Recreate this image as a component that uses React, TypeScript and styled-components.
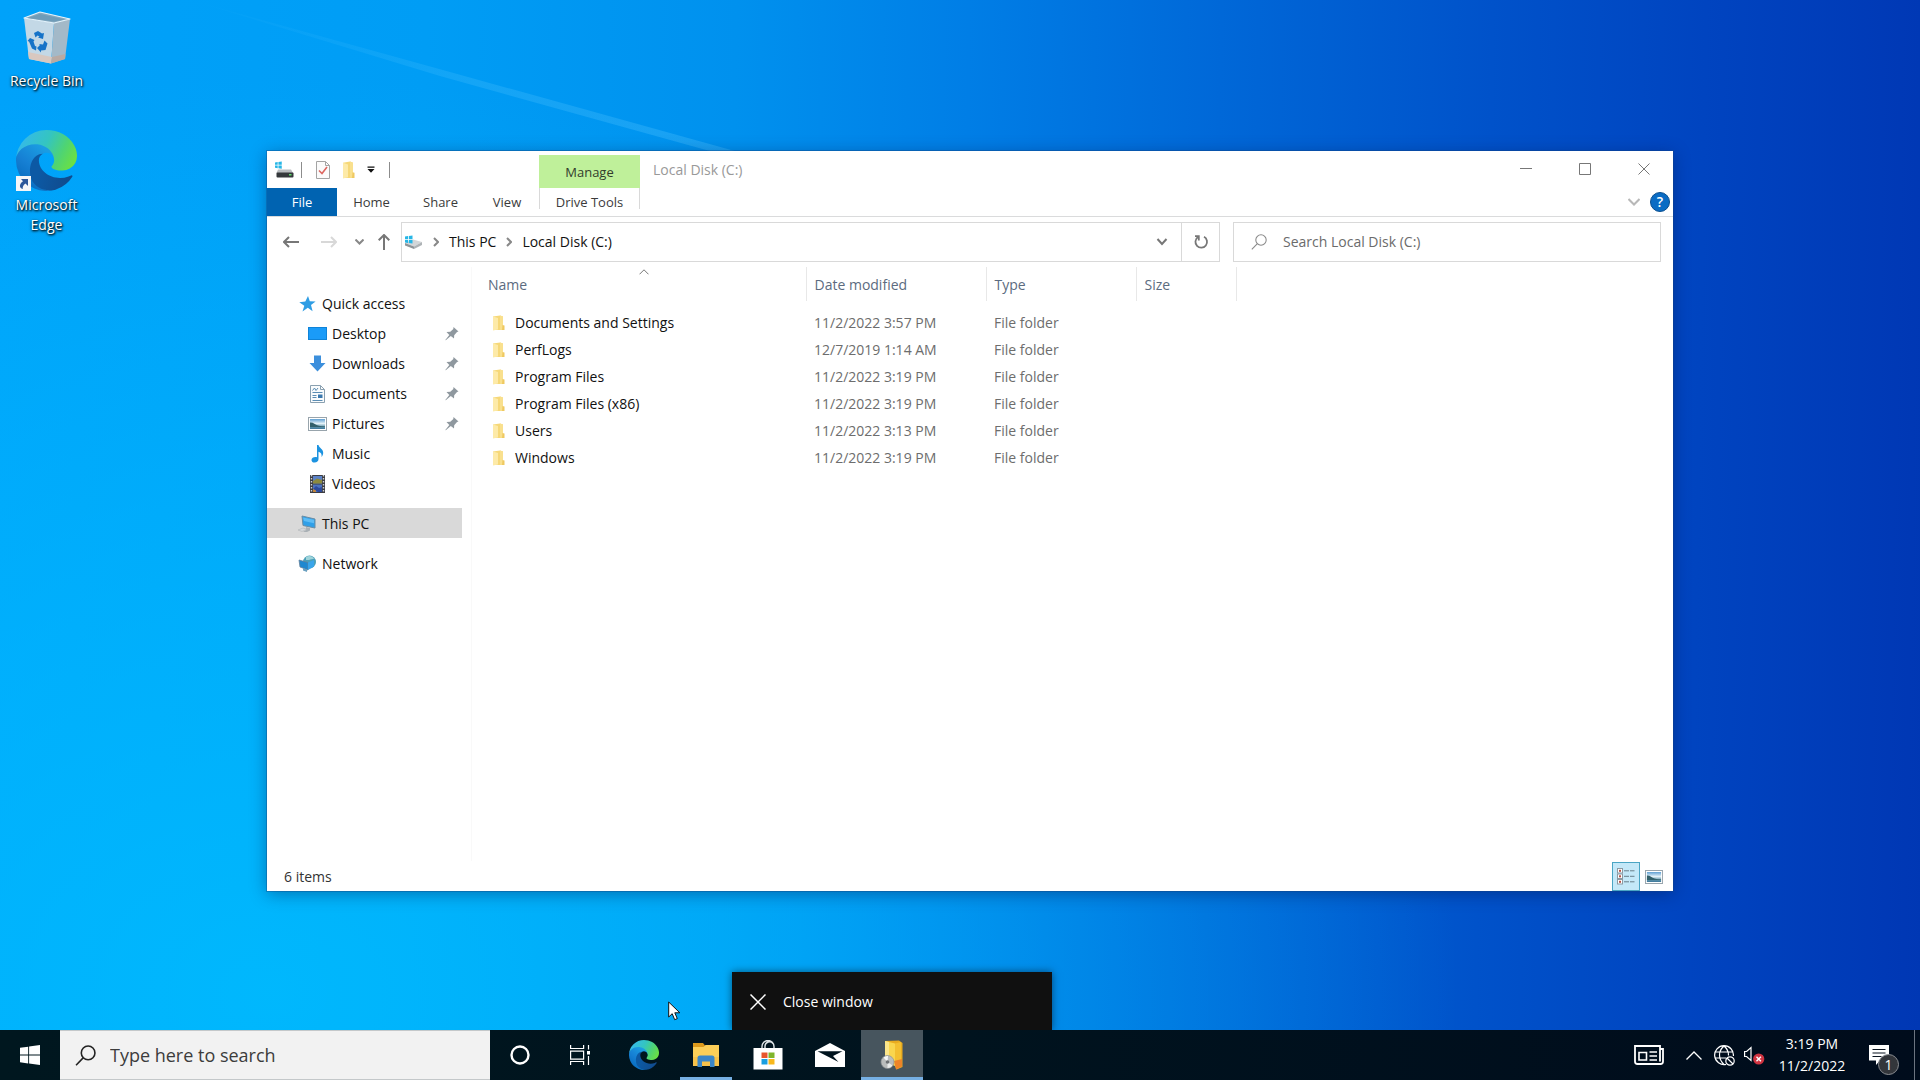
import React, { useId } from "react";
import styled, { createGlobalStyle } from "styled-components";

const GlobalStyle = createGlobalStyle`
  *, *::before, *::after { box-sizing: border-box; }
  html, body { margin: 0; padding: 0; }
  body, button, input, table {
    font-family: "Open Sans", "Noto Sans", "Liberation Sans", sans-serif;
    font-size: 14px;
    line-height: 20px;
  }
  button { border: 0; padding: 0; background: none; color: inherit; cursor: default; }
  svg { display: block; flex: none; }
`;

/* ---------- Shell ---------- */

const Screen = styled.div`
  position: relative;
  display: flex;
  flex-direction: column;
  height: 100vh;
  overflow: hidden;
  background:
    radial-gradient(ellipse 62% 85% at 14% 92%, rgba(0, 192, 255, 0.75), rgba(0, 188, 255, 0.5) 45%, transparent 100%),
    linear-gradient(91deg, #00a2fa 0%, #009df5 22%, #0091ee 38%, #007ee6 50%, #0068d8 63%, #0052ca 77%, #0044c0 88%, #0037b4 100%);
`;

const Wallpaper = styled.span`
  position: absolute;
  left: 0;
  top: 0;
`;

const Desktop = styled.main`
  position: relative;
  flex: 1;
  min-height: 0;
`;

const Shortcuts = styled.nav`
  position: relative;
  display: flex;
  flex-direction: column;
  gap: 39px;
  width: 93px;
  padding-top: 9px;
`;

const Shortcut = styled.button`
  display: flex;
  flex-direction: column;
  align-items: center;
  gap: 4px;
  color: #fff;
  text-shadow: 1px 1px 2px #000, 0 1px 3px rgba(0, 0, 0, 0.7);
`;

const ShortcutArt = styled.span`
  position: relative;
  display: block;
`;

const LinkBadge = styled.span`
  position: absolute;
  left: 0;
  bottom: 0;
`;

/* ---------- Explorer window ---------- */

const Window = styled.section`
  position: absolute;
  inset: 151px 247px 139px 267px;
  display: flex;
  flex-direction: column;
  background: #fff;
  color: #111;
  box-shadow: 0 0 0 1px rgba(20, 70, 130, 0.35), 0 3px 16px rgba(0, 20, 70, 0.4);
`;

const TitleBar = styled.header`
  display: flex;
  height: 37px;
  flex: none;
`;

const QuickTools = styled.div`
  display: flex;
  align-items: center;
  width: 272px;
`;

const ToolButton = styled.button<{ $w: number }>`
  display: flex;
  justify-content: center;
  width: ${(p) => p.$w}px;
`;

const ToolRule = styled.span`
  width: 1px;
  height: 16px;
  background: #8c8c8c;
`;

const ManageTab = styled.div`
  width: 101px;
  margin-top: 4px;
  padding-top: 7px;
  background: #bff09a;
  color: #333c2c;
  font-size: 13px;
  text-align: center;
`;

const WindowTitle = styled.h1`
  flex: 1;
  margin: 0;
  padding: 9px 0 0 13px;
  color: #999;
  font-size: 14px;
  font-weight: 400;
  line-height: 20px;
`;

const CaptionButton = styled.button`
  display: flex;
  align-items: center;
  justify-content: center;
  width: 59px;
  height: 36px;
`;

const RibbonTabs = styled.nav`
  display: flex;
  height: 29px;
  flex: none;
  border-bottom: 1px solid #dadbdc;
  color: #3b3b3b;
`;

const RibbonTab = styled.button<{ $w: number; $kind?: "file" | "context" }>`
  width: ${(p) => p.$w}px;
  height: ${(p) => (p.$kind === "context" ? 21 : 28)}px;
  padding-bottom: ${(p) => (p.$kind === "context" ? 0 : 1)}px;
  padding-top: ${(p) => (p.$kind === "context" ? 6 : 0)}px;
  border: solid #d9d9d9;
  border-width: ${(p) => (p.$kind === "context" ? "0 1px" : "0")};
  background: ${(p) => (p.$kind === "file" ? "#0063b1" : "transparent")};
  color: ${(p) => (p.$kind === "file" ? "#fff" : "inherit")};
  font-size: 13px;
  line-height: 16px;
`;

const RibbonEnd = styled.div`
  display: flex;
  align-items: center;
  gap: 10px;
  margin-left: auto;
  padding-right: 3px;
`;

const HelpButton = styled.button`
  width: 20px;
  height: 20px;
  border-radius: 50%;
  border: 1px solid #0a4f8f;
  background: #0a6cc4;
  color: #fff;
  font-size: 14px;
  font-weight: 600;
  line-height: 18px;
`;

const NavRow = styled.div`
  display: flex;
  align-items: center;
  height: 50px;
  flex: none;
  padding: 5px 12px 5px 8px;
`;

const NavButton = styled.button<{ $w: number }>`
  display: flex;
  justify-content: center;
  width: ${(p) => p.$w}px;
`;

const AddressBar = styled.div`
  display: flex;
  align-items: center;
  flex: 1;
  height: 40px;
  padding-left: 2px;
  border: 1px solid #d9d9d9;
`;

const CrumbMark = styled.button`
  margin: 0 10px;
`;

const DropButton = styled.button`
  display: flex;
  align-items: center;
  justify-content: center;
  width: 38px;
  height: 38px;
  margin-left: auto;
`;

const RefreshButton = styled(DropButton)`
  margin-left: 0;
  border-left: 1px solid #d9d9d9;
`;

const SearchLabel = styled.label`
  display: flex;
  align-items: center;
  gap: 16px;
  width: 428px;
  height: 40px;
  margin-left: 13px;
  padding-left: 17px;
  border: 1px solid #d9d9d9;
`;

const SearchInput = styled.input`
  flex: 1;
  min-width: 0;
  padding: 0;
  border: 0;
  outline: 0;
  background: transparent;
  color: #222;
  &::placeholder { color: #6b6b6b; opacity: 1; }
`;

const Body = styled.div`
  display: flex;
  flex: 1;
  min-height: 0;
`;

const Sidebar = styled.nav`
  width: 205px;
  padding-top: 21px;
  border-right: 1px solid #f9f9f9;
`;

const SideItem = styled.button<{ $child?: boolean; $selected?: boolean; $apart?: boolean }>`
  display: flex;
  align-items: center;
  width: 195px;
  height: 30px;
  margin-top: ${(p) => (p.$apart ? 10 : 0)}px;
  padding: 1px 3px 0 ${(p) => (p.$child ? 40 : 30)}px;
  background: ${(p) => (p.$selected ? "#d9d9d9" : "transparent")};
  text-align: left;
`;

const SideIcon = styled.span`
  display: flex;
  justify-content: center;
  width: 20px;
  margin-right: 5px;
`;

const SideLabel = styled.span`
  flex: 1;
`;

const FilePane = styled.div`
  flex: 1;
  padding-left: 5px;
`;

const FileTable = styled.table`
  table-layout: fixed;
  width: 759px;
  border-collapse: collapse;
`;

const HeadCell = styled.th`
  position: relative;
  height: 34px;
  padding: 2px 0 0 8px;
  border-right: 1px solid #e8e8e8;
  color: #5c6b80;
  font-weight: 400;
  text-align: left;
  &:first-child { padding-left: 11px; }
`;

const SortMark = styled.span`
  position: absolute;
  top: 2px;
  left: 50%;
  margin-left: -2px;
`;

const FileRow = styled.tr`
  height: 27px;
  color: #6d6d6d;
`;

const Spacer = styled.tr`
  height: 8px;
`;

const Cell = styled.td`
  padding: 0 0 0 8px;
  white-space: nowrap;
`;

const NameCell = styled.div`
  display: flex;
  align-items: center;
  gap: 10px;
  padding-left: 7px;
  color: #111;
`;

const StatusBar = styled.footer`
  display: flex;
  align-items: center;
  height: 30px;
  flex: none;
  padding: 1px 5px 0 17px;
  color: #333;
`;

const ViewButtons = styled.div`
  display: flex;
  margin-left: auto;
`;

const ViewButton = styled.button<{ $on?: boolean }>`
  display: flex;
  align-items: center;
  justify-content: center;
  width: 28px;
  height: 29px;
  border: 1px solid ${(p) => (p.$on ? "#4aa5c4" : "transparent")};
  background: ${(p) => (p.$on ? "#c4e8f8" : "transparent")};
`;

/* ---------- Jump list and pointer ---------- */

const JumpList = styled.div`
  position: absolute;
  left: 732px;
  bottom: 0;
  width: 320px;
  height: 58px;
  background: #101010;
  box-shadow: 0 0 8px rgba(0, 0, 0, 0.5);
`;

const JumpItem = styled.button`
  display: flex;
  align-items: center;
  gap: 17px;
  width: 100%;
  height: 58px;
  padding: 1px 0 0 18px;
  color: #fff;
`;

const Pointer = styled.span`
  position: absolute;
  left: 668px;
  top: 1001px;
`;

/* ---------- Taskbar ---------- */

const Taskbar = styled.footer`
  position: relative;
  display: flex;
  height: 50px;
  flex: none;
  background: linear-gradient(90deg, #00171f, #00131e 50%, #000c1c);
  color: #fff;
`;

const TaskButton = styled.button<{ $w?: number; $mark?: "open" | "active" }>`
  position: relative;
  display: flex;
  align-items: center;
  justify-content: center;
  width: ${(p) => p.$w ?? 62}px;
  height: 50px;
  background: ${(p) => (p.$mark === "active" ? "#47555e" : "transparent")};
  &::after {
    content: "";
    display: ${(p) => (p.$mark ? "block" : "none")};
    position: absolute;
    left: ${(p) => (p.$mark === "active" ? 0 : 5)}px;
    right: ${(p) => (p.$mark === "active" ? 0 : 5)}px;
    bottom: 0;
    height: 3px;
    background: #76b0e4;
  }
`;

const TaskSearch = styled.label`
  display: flex;
  align-items: center;
  gap: 14px;
  width: 430px;
  height: 50px;
  padding-left: 15px;
  border: 1px solid #c4c8ca;
  border-width: 1px 0;
  background: #f2f2f2;
`;

const TaskSearchInput = styled(SearchInput)`
  font-size: 18px;
  line-height: 24px;
  &::placeholder { color: #3c3c3c; }
`;

const Apps = styled.div`
  display: flex;
  margin-left: 3px;
`;

const Tray = styled.div`
  display: flex;
  align-items: center;
  margin-left: auto;
`;

const TrayButton = styled.button<{ $w: number }>`
  display: flex;
  align-items: center;
  justify-content: center;
  width: ${(p) => p.$w}px;
  height: 50px;
`;

const Clock = styled.button`
  width: 86px;
  height: 50px;
  line-height: 22px;
  text-align: center;
`;

const NoticeButton = styled(TrayButton)`
  position: relative;
  margin-right: 12px;
`;

const NoticeCount = styled.span`
  position: absolute;
  left: 23px;
  top: 24px;
  width: 21px;
  height: 21px;
  border: 1px solid #8a8d92;
  border-radius: 50%;
  background: #33363b;
  line-height: 19px;
`;

const ShowDesktop = styled.button`
  width: 6px;
  height: 50px;
  border-left: 1px solid #6c7480;
`;

/* ---------- Drawings ---------- */

const LightRay = () => {
  const id = useId();
  return (
    <svg width="900" height="200" viewBox="0 0 900 200">
      <defs>
        <linearGradient id={id} x1="0" y1="0" x2="1" y2="0">
          <stop offset="0" stopColor="#5cc8ff" stopOpacity="0" />
          <stop offset="0.5" stopColor="#5cc8ff" stopOpacity="0.22" />
          <stop offset="1" stopColor="#5cc8ff" stopOpacity="0.3" />
        </linearGradient>
      </defs>
      <path d="M190 0 450 72 760 158 735 158 440 76z" fill={`url(#${id})`} />
    </svg>
  );
};

const EdgeIcon = ({ size }: { size: number }) => {
  const id = useId();
  return (
    <svg width={size} height={size} viewBox="0 0 256 256">
      <defs>
        <linearGradient id={id + "a"} x1="0.2" y1="0.5" x2="1" y2="0.7">
          <stop offset="0" stopColor="#0c59a4" />
          <stop offset="1" stopColor="#114a8b" />
        </linearGradient>
        <linearGradient id={id + "b"} x1="0.8" y1="0.2" x2="0.3" y2="1">
          <stop offset="0" stopColor="#1b9de2" />
          <stop offset="0.5" stopColor="#1680d4" />
          <stop offset="1" stopColor="#0669bc" />
        </linearGradient>
        <linearGradient id={id + "c"} x1="0" y1="0.3" x2="1" y2="0.65">
          <stop offset="0" stopColor="#35b8ee" />
          <stop offset="0.45" stopColor="#34c5c0" />
          <stop offset="0.75" stopColor="#4fd472" />
          <stop offset="1" stopColor="#6be043" />
        </linearGradient>
      </defs>
      <path fill={`url(#${id}b)`} d="M105.73 241.42a79.2 79.2 0 0 1-22.74-21.34 80.72 80.72 0 0 1 29.53-120.36c3.13-1.47 8.48-4.13 15.6-4a32.4 32.4 0 0 1 25.69 13 31.88 31.88 0 0 1 6.36 18.66c0-.21 24.5-79.64-80-79.64-44 0-80.17 41.68-80.17 78.2a130.02 130.02 0 0 0 11.95 55.99 128 128 0 0 0 156.38 67.11 75.55 75.55 0 0 1-62.6-7.62z" />
      <path fill={`url(#${id}a)`} d="M231 190.5a93.7 93.7 0 0 1-10.54 4.71 101.87 101.87 0 0 1-35.9 6.46c-47.32 0-88.54-32.55-88.54-74.32a31.48 31.48 0 0 1 16.43-27.31c-42.8 1.8-53.8 46.4-53.8 72.53 0 73.88 68.09 81.37 82.76 81.37 7.91 0 19.84-2.3 27-4.56l1.31-.44a128.34 128.34 0 0 0 66.6-52.8 4 4 0 0 0-5.32-5.64z" />
      <path fill={`url(#${id}c)`} d="M152.33 148.86c-.81 1.05-3.3 2.5-3.3 5.66 0 2.61 1.7 5.12 4.72 7.23 14.38 10 41.49 8.68 41.56 8.68a59.56 59.56 0 0 0 30.27-8.35 61.38 61.38 0 0 0 30.43-52.88c.26-22.41-8-37.31-11.34-43.91C223.46 23.84 177.72 0 128 0A128 128 0 0 0 0 126.2c.48-36.54 36.8-66.05 80-66.05 3.5 0 23.46.34 42 10.07 16.34 8.58 24.9 18.94 30.85 29.21 6.18 10.67 7.28 24.15 7.28 29.52 0 5.37-2.74 13.33-7.8 19.91z" />
    </svg>
  );
};

const RecycleBin = () => (
  <svg width="50" height="58" viewBox="0 0 50 58">
    <path d="M2 9 32 14 29 54.500 7 50z" fill="#c3d8e6" />
    <path d="M32 14 48 10 43 50 29 54.500z" fill="#a3b9c8" />
    <path d="M6 43 30 48 29 54.500 7 50z" fill="#d8c8c0" />
    <path d="M30 48 43.500 45 43 50 29 54.500z" fill="#b9aaa3" />
    <path d="M2 9 18 3 48 10 32 14z" fill="#86a9bf" stroke="#e8f4fb" strokeWidth="1.200" strokeLinejoin="round" />
    <path d="M6 9 18 5 43 10.500 32 12.500z" fill="#6f9cb8" />
    <g fill="#1673c8">
      <path d="m12 24 4-2 4 2.500 2-.5-1 6-5-1.500 1.500-1-2-1-2 2z" />
      <path d="m8 29 4.500 2-1 1.500 1.500 4.500 1.500.5-.5 4-4-2-3-7-1.500-.5z" />
      <path d="m17 35 4 .5 1.500-4 3 3-2 6.500-4.500.5v2l-4-4.500 3-3z" />
    </g>
  </svg>
);

const ShortcutArrow = () => (
  <svg width="15" height="15" viewBox="0 0 15 15">
    <rect width="15" height="15" fill="#f4f6f8" />
    <path d="M5 3h7v7L9.500 7.600C7 9.500 6.500 11 6.800 13 3 12 3 8 7 5.200z" fill="#2b579a" />
  </svg>
);

const Folder = ({ tall = false }: { tall?: boolean }) => (
  <svg width="13" height={tall ? 18 : 16} viewBox="0 0 13 16" preserveAspectRatio="none">
    <path d="M1 1.500 8 .5l3 1v13.500H1z" fill="#f6d878" />
    <path d="M1 1.500 6 3v11.500L1 15.500z" fill="#fdeaa8" />
    <path d="M8 .5 11 1.500v13L8 15z" fill="#f9e08e" />
    <path d="M10.500 10 12.500 10.500v4.500H10z" fill="#efc961" />
  </svg>
);

const Flag = ({ x = 0, y = 0, s = 1 }) => (
  <g transform={`translate(${x} ${y}) scale(${s})`} fill="#27b6e6">
    <path d="M0 .5 3 0v3H0zM3.800 0 7.500-.5V3H3.800zM0 3.800h3V7l-3-.5zM3.800 3.800h3.700v3.700L3.800 7z" />
  </g>
);

const TitleDrive = () => (
  <svg width="20" height="18" viewBox="0 0 20 18">
    <Flag x={1} y={1} s={0.9} />
    <path d="M4 8.500h13l2 3.500H2.500z" fill="#b9bdc0" />
    <rect x="2.500" y="11.500" width="17" height="5" rx="1" fill="#34383b" />
    <rect x="15" y="13" width="2.500" height="1.500" fill="#5fdc6a" />
  </svg>
);

const DriveIcon = () => (
  <svg width="19" height="16" viewBox="0 0 19 16">
    <path d="m1 9 8-3.500L18 8l-8 4.500z" fill="#d3d6d8" />
    <path d="m1 9 9 3.500V15l-9-3.500z" fill="#8e9498" />
    <path d="M10 12.500 18 8v3l-8 4z" fill="#aeb3b6" />
    <Flag x={1} y={2} />
  </svg>
);

const CheckPage = () => (
  <svg width="14" height="18" viewBox="0 0 14 18">
    <path d="M.5.5h9l4 4v13H.5z" fill="#fbfbfb" stroke="#a4a4a4" />
    <path d="M9.500.5v4h4" fill="none" stroke="#a4a4a4" />
    <path d="m3 9.500 3 3 5-6.500" fill="none" stroke="#dc6660" strokeWidth="1.600" />
  </svg>
);

const CustomizeMark = () => (
  <svg width="8" height="8" viewBox="0 0 8 8" fill="#111">
    <path d="M.5.500h7v1.200h-7zM.5 3h7L4 6.800z" />
  </svg>
);

type LineProps = { w: number; h: number; d: string; color?: string; sw?: number };
const Line = ({ w, h, d, color = "#777", sw = 1 }: LineProps) => (
  <svg width={w} height={h} viewBox={`0 0 ${w} ${h}`} fill="none" stroke={color} strokeWidth={sw}>
    <path d={d} />
  </svg>
);

const Magnifier = ({ size, color, sw }: { size: number; color: string; sw: number }) => (
  <svg width={size} height={size} viewBox="0 0 20 20" fill="none" stroke={color} strokeWidth={sw}>
    <circle cx="12.500" cy="7.500" r="6.500" />
    <path d="M8 12 1 19.300" />
  </svg>
);

const RefreshMark = () => (
  <svg width="16" height="16" viewBox="0 0 16 16" fill="none" stroke="#777" strokeWidth="1.800">
    <path d="M11 2.800a5.800 5.800 0 1 1-6 .3" />
    <path d="M2 2.200h3.800v4.300" />
  </svg>
);

const Pin = () => (
  <svg width="14" height="14" viewBox="0 0 14 14" fill="#8f989f">
    <path d="m8.500 0 5 4.500-1.500.5-2.800 3.200L9 11.500 5.800 9 .8 13.200.3 13l4-5L1.500 5l3.800-.2L8.300 2z" />
  </svg>
);

const StarIcon = () => (
  <svg width="17" height="16" viewBox="0 0 17 16">
    <path d="m9 0 1.800 5.200 5.800.2-4.600 3.500 1.600 6.300-4.800-3.500L3.500 15.500l1.800-5.700L.3 6.200l6-.6z" fill="#2f9de4" />
  </svg>
);

const DesktopIcon = () => (
  <svg width="19" height="13" viewBox="0 0 19 13">
    <rect x=".5" y=".5" width="18" height="12" fill="#1a9bf8" stroke="#0f83d8" />
  </svg>
);

const DownloadIcon = () => (
  <svg width="17" height="17" viewBox="0 0 17 17">
    <path d="M5 .5h7v7.500h4.500L8.500 16.500.5 8H5z" fill="#3c8fdc" />
  </svg>
);

const DocumentIcon = () => (
  <svg width="15" height="18" viewBox="0 0 15 18" fill="none" stroke="#8aa0b0">
    <path d="M.5.5h10l4 4v13H.5z" fill="#fafcfd" />
    <path d="M10.500.5v4h4" />
    <path d="M2.500 5.500 4.500 3l1.500 2.500 2-2.500M2.500 7.500h10M2.500 10.500h4M2.500 12.500h4M2.500 15.500h10" stroke="#5b8db4" />
    <path d="M8 9.500h4.500v3.500H8z" fill="#3a78ae" stroke="none" />
  </svg>
);

const PictureIcon = ({ w = 19, h = 14 }) => {
  const id = useId();
  return (
    <svg width={w} height={h} viewBox="0 0 19 14" preserveAspectRatio="none">
      <defs>
        <linearGradient id={id} x1="0" y1="0" x2="0" y2="1">
          <stop offset="0" stopColor="#5f9fd2" />
          <stop offset="0.450" stopColor="#e3f1f7" />
          <stop offset="0.800" stopColor="#5a90a8" />
          <stop offset="1" stopColor="#3e789c" />
        </linearGradient>
      </defs>
      <rect x=".5" y=".5" width="18" height="13" fill="#fff" stroke="#98a4ac" />
      <rect x="2" y="2" width="15" height="10" fill={`url(#${id})`} />
      <path d="M2 5.500c3-.5 5 2 8 3s5 .5 7 1v.5H2z" fill="#32606a" />
    </svg>
  );
};

const MusicIcon = () => (
  <svg width="13" height="18" viewBox="0 0 13 18">
    <path d="M6 0h1.500c.5 3 5 4 4.700 8-.1 1.800-.8 3-1.700 4 .6-3-.6-4.600-3-5.300V14c0 2-1.600 3.600-3.900 3.600C1.800 17.600.5 16.600.5 15c0-2 2.500-3.500 5.500-2.800z" fill="#1c93e0" />
  </svg>
);

const VideoIcon = () => (
  <svg width="15" height="18" viewBox="0 0 15 18">
    <rect width="15" height="18" fill="#3d3d42" />
    <path d="M1.500 0v18M13.500 0v18" stroke="#cfd2d6" strokeWidth="1.400" strokeDasharray="1.500 1.500" />
    <rect x="3" y="1" width="9" height="7.500" fill="#5b82c8" />
    <rect x="3" y="9.500" width="9" height="7.500" fill="#4c72c0" />
    <path d="M3 6 7 3.500 12 5v3.500H3z" fill="#8c8a3e" />
    <path d="m3 14 3-3 3 2 3-1v5H8z" fill="#2d4a9c" />
    <path d="m3 14 3 1.500V17H3z" fill="#c4863c" />
  </svg>
);

const PcIcon = () => (
  <svg width="20" height="18" viewBox="0 0 20 18">
    <path d="m5 1 13 3v9L6 10.500z" fill="#2f9fe8" stroke="#6a8da5" />
    <path d="m6 2.500 11 2.300v3.500L7 6z" fill="#5dbcf5" />
    <path d="m9 12 4 1v2.500l-3 1.500H6l3-2z" fill="#a9b0b5" />
    <path d="m1 15 5-2 4 1.200-5 2.300z" fill="#d3d7da" stroke="#a8adb0" strokeWidth=".5" />
  </svg>
);

const NetworkIcon = () => (
  <svg width="19" height="18" viewBox="0 0 19 18">
    <circle cx="11.500" cy="7" r="6.500" fill="#4a9fb8" />
    <path d="M8 2c3-2 7-1 8 2-3-.5-4 1.500-8 1z" fill="#9fd4da" />
    <path d="m1 5 9 2.500v7.500l-8-3z" fill="#1e88d0" stroke="#63809a" strokeWidth=".8" />
    <path d="m10 7.500 6-2.500v6.500L10 15z" fill="#3aa5ea" />
    <path d="m5 13 4 1.500v2.500l-4-1.500z" fill="#6aa0c0" />
  </svg>
);

const DetailsIcon = () => (
  <svg width="18" height="17" viewBox="0 0 18 17">
    {[0.5, 6, 11.500].map((y) => (
      <g key={y}>
        <rect x=".5" y={y} width="5" height="4.500" fill="#fff" stroke="#8b9aa3" />
        <rect x="2" y={y + 1.300} width="2" height="2" fill="#b55248" />
        <path d={`M7 ${y + 2.300}h5M13 ${y + 2.300}h4.500`} stroke="#6a7f8a" />
      </g>
    ))}
  </svg>
);

const StartIcon = () => (
  <svg width="20" height="20" viewBox="0 0 20 20" fill="#fff">
    <path d="M0 2.800 8.200 1.700v7.900H0zM9.100 1.500 20 0v9.600H9.100zM0 10.500h8.200v7.900L0 17.300zM9.100 10.500H20V20L9.100 18.500z" />
  </svg>
);

const CortanaIcon = () => (
  <svg width="20" height="20" viewBox="0 0 20 20">
    <circle cx="10" cy="10" r="8.500" fill="none" stroke="#fff" strokeWidth="2.400" />
  </svg>
);

const TaskViewIcon = () => (
  <svg width="21" height="20" viewBox="0 0 21 20" fill="none" stroke="#fff" strokeWidth="1.200">
    <path d="M.6 0v3.500h13V0M.6 6.100h13v8H.6zM.6 20v-3.500h13V20M18.500 0v4.500M18.500 11v9" />
    <rect x="17" y="6" width="3" height="3.500" fill="#fff" stroke="none" />
  </svg>
);

const ExplorerIcon = () => (
  <svg width="28" height="24" viewBox="0 0 28 24">
    <path d="M1 0h10l2 2.500V6H1z" fill="#dd9a1c" />
    <path d="M1 4h10.500L13.500 2H27v21H1z" fill="#fccf58" />
    <path d="M1 14h26v9H1z" fill="#f7c24a" />
    <path d="M5.500 24V15q0-2.500 2.500-2.500h12q2.500 0 2.500 2.500v9H18v-5.500h-8V24z" fill="#3b86c8" />
  </svg>
);

const StoreIcon = () => (
  <svg width="30" height="30" viewBox="0 0 30 30">
    <path d="M9 9V6.500a6 6 0 0 1 12 0V9M12 9V6a4.500 4.500 0 0 1 8-2.500" fill="none" stroke="#dfe5e8" strokeWidth="1.400" />
    <path d="M.5 8h29v21.500h-29z" fill="#fff" />
    <path d="M8.500 12.500h6v5.500h-6z" fill="#e8552d" />
    <path d="M15.500 12.500h6v5.500h-6z" fill="#7fb52b" />
    <path d="M8.500 19h6v5.500h-6z" fill="#1a9fe0" />
    <path d="M15.500 19h6v5.500h-6z" fill="#f8b81c" />
  </svg>
);

const MailIcon = () => (
  <svg width="30" height="24" viewBox="0 0 30 24">
    <path d="M0 8 15 0l15 8v16H0z" fill="#fff" />
    <path d="M2.500 8.200h25L18 13l5.500 6L2.500 8.200z" fill="#00131e" />
  </svg>
);

const InstallerIcon = () => (
  <svg width="24" height="30" viewBox="0 0 24 30">
    <path d="M5 1 19 .5 22.500 3v24l-6 2.500z" fill="#e9ab1f" />
    <path d="M5 1 15 3.500V26L5 22z" fill="#f9d64e" />
    <path d="M5 1 9 2v20l-4-1z" fill="#fbe58a" />
    <path d="m15 3.500 6-1.500v24l-4 3-2-3z" fill="#f3bf30" />
    <path d="m14 21 8-2v7.500l-6 3z" fill="#ee8428" />
    <circle cx="7.500" cy="22" r="6.500" fill="#b9bcbc" stroke="#8d9193" strokeWidth=".7" />
    <path d="m7.500 22-4-4.500A6 6 0 0 1 8 16z" fill="#f6f7f7" />
    <path d="m7.500 22 5 3.500a6 6 0 0 1-5 2.500z" fill="#e9ebeb" />
    <circle cx="7.500" cy="22" r="1.800" fill="#6d7174" />
  </svg>
);

const NewsIcon = () => (
  <svg width="30" height="20" viewBox="0 0 30 20" fill="none" stroke="#fff" strokeWidth="1.800">
    <path d="M26 4V1H1v15.500Q1 19 3.500 19h23q2.500 0 2.500-2.500V4h-3v12.500" />
    <path d="M5 7.500h7.500V15H5zM15.500 7h7.500M15.500 11h7.500M15.500 15h7.500" strokeWidth="1.600" />
  </svg>
);

const GlobeIcon = () => (
  <svg width="21" height="21" viewBox="0 0 21 21" fill="none" stroke="#fff" strokeWidth="1.200">
    <path d="M12 19.300A9.400 9.400 0 1 1 19.400 11M1 7h18M1 13h11M10 1C4 6 4 14 10 19.400M10 1c3 2.500 4.600 6 4.500 9.500" />
    <circle cx="16" cy="16" r="4.200" />
    <path d="m13 13 6 6" />
  </svg>
);

const SpeakerIcon = () => (
  <svg width="21" height="20" viewBox="0 0 21 20">
    <path d="M.6 6.500h2L7 2.500v13l-4.400-4h-2z" fill="none" stroke="#fff" strokeWidth="1.200" />
    <circle cx="14.700" cy="14" r="5.600" fill="#cf3340" />
    <path d="m12.500 11.800 4.400 4.400M16.900 11.800l-4.400 4.400" stroke="#fff" strokeWidth="1.400" />
  </svg>
);

const NoticeIcon = () => (
  <svg width="20" height="20" viewBox="0 0 20 20">
    <path d="M0 0h20v15.500h-9L7 20v-4.500H0z" fill="#fff" />
    <path d="M3.500 4.500h13M3.500 8h13M3.500 11.500h9" stroke="#0a1420" strokeWidth="1.200" />
  </svg>
);

const PointerArt = () => (
  <svg width="13" height="20" viewBox="0 0 13 20">
    <path d="M.7 1v15l3.500-3.300 2.500 6 2.600-1.100-2.500-5.800h5z" fill="#fff" stroke="#111" />
  </svg>
);

/* ---------- Data ---------- */

type Place = { label: string; icon: React.ReactNode; child?: boolean; pinned?: boolean; selected?: boolean; apart?: boolean };

const places: Place[] = [
  { label: "Quick access", icon: <StarIcon /> },
  { label: "Desktop", icon: <DesktopIcon />, child: true, pinned: true },
  { label: "Downloads", icon: <DownloadIcon />, child: true, pinned: true },
  { label: "Documents", icon: <DocumentIcon />, child: true, pinned: true },
  { label: "Pictures", icon: <PictureIcon />, child: true, pinned: true },
  { label: "Music", icon: <MusicIcon />, child: true },
  { label: "Videos", icon: <VideoIcon />, child: true },
  { label: "This PC", icon: <PcIcon />, selected: true, apart: true },
  { label: "Network", icon: <NetworkIcon />, apart: true },
];

const files = [
  ["Documents and Settings", "11/2/2022 3:57 PM"],
  ["PerfLogs", "12/7/2019 1:14 AM"],
  ["Program Files", "11/2/2022 3:19 PM"],
  ["Program Files (x86)", "11/2/2022 3:19 PM"],
  ["Users", "11/2/2022 3:13 PM"],
  ["Windows", "11/2/2022 3:19 PM"],
];

/* ---------- Page ---------- */

const Explorer = () => (
  <Window aria-label="Local Disk (C:)">
    <TitleBar>
      <QuickTools>
        <ToolButton $w={34} aria-label="Window menu"><TitleDrive /></ToolButton>
        <ToolRule />
        <ToolButton $w={42} aria-label="Properties"><CheckPage /></ToolButton>
        <ToolButton $w={9} aria-label="New folder"><Folder tall /></ToolButton>
        <ToolButton $w={36} aria-label="Customize toolbar"><CustomizeMark /></ToolButton>
        <ToolRule />
      </QuickTools>
      <ManageTab>Manage</ManageTab>
      <WindowTitle>Local Disk (C:)</WindowTitle>
      <CaptionButton aria-label="Minimize"><Line w={12} h={12} d="M0 5.500h12" /></CaptionButton>
      <CaptionButton aria-label="Maximize"><Line w={12} h={12} d="M.5.5h11v11H.5z" /></CaptionButton>
      <CaptionButton aria-label="Close"><Line w={12} h={12} d="m.5.5 11 11M11.500.5l-11 11" /></CaptionButton>
    </TitleBar>
    <RibbonTabs>
      <RibbonTab $w={70} $kind="file">File</RibbonTab>
      <RibbonTab $w={69}>Home</RibbonTab>
      <RibbonTab $w={69}>Share</RibbonTab>
      <RibbonTab $w={64}>View</RibbonTab>
      <RibbonTab $w={101} $kind="context">Drive Tools</RibbonTab>
      <RibbonEnd>
        <button aria-label="Expand the ribbon"><Line w={12} h={8} d="m.5 1 5.500 5.500L11.500 1" color="#b8b8b8" sw={2} /></button>
        <HelpButton aria-label="Help">?</HelpButton>
      </RibbonEnd>
    </RibbonTabs>
    <NavRow>
      <NavButton $w={32} aria-label="Back"><Line w={16} h={12} d="M16 6H1M6 1 1 6l5 5" sw={2} /></NavButton>
      <NavButton $w={44} aria-label="Forward"><Line w={16} h={12} d="M0 6h15M10 1l5 5-5 5" color="#d8d8d8" sw={2} /></NavButton>
      <NavButton $w={16} aria-label="Recent locations"><Line w={9} h={6} d="m.5.5 4 4 4-4" sw={2} color="#888" /></NavButton>
      <NavButton $w={34} aria-label="Up"><Line w={12} h={16} d="M6 16V1M.7 6.300 6 1l5.300 5.300" sw={2} /></NavButton>
      <AddressBar>
        <NavButton $w={19} aria-label="Drive"><DriveIcon /></NavButton>
        <CrumbMark aria-label="Folders"><Line w={6} h={10} d="m1 1 4 4-4 4" sw={2} color="#888" /></CrumbMark>
        <button>This PC</button>
        <CrumbMark aria-label="Folders in This PC"><Line w={6} h={10} d="m1 1 4 4-4 4" sw={2} color="#888" /></CrumbMark>
        <button>Local Disk (C:)</button>
        <DropButton aria-label="Previous locations"><Line w={12} h={8} d="m1.500 1 4.500 5 4.500-5" sw={2} /></DropButton>
        <RefreshButton aria-label="Refresh"><RefreshMark /></RefreshButton>
      </AddressBar>
      <SearchLabel>
        <Magnifier size={16} color="#888" sw={1.3} />
        <SearchInput type="text" aria-label="Search Local Disk (C:)" placeholder="Search Local Disk (C:)" />
      </SearchLabel>
    </NavRow>
    <Body>
      <Sidebar>
        {places.map((p) => (
          <SideItem key={p.label} $child={p.child} $selected={p.selected} $apart={p.apart}>
            <SideIcon>{p.icon}</SideIcon>
            <SideLabel>{p.label}</SideLabel>
            {p.pinned && <Pin />}
          </SideItem>
        ))}
      </Sidebar>
      <FilePane>
        <FileTable>
          <colgroup>
            <col width="329" />
            <col width="180" />
            <col width="150" />
            <col width="100" />
          </colgroup>
          <thead>
            <tr>
              <HeadCell>
                Name
                <SortMark><Line w={10} h={6} d="m.5 5.300 4.500-4.500 4.500 4.500" color="#777" /></SortMark>
              </HeadCell>
              <HeadCell>Date modified</HeadCell>
              <HeadCell>Type</HeadCell>
              <HeadCell>Size</HeadCell>
            </tr>
          </thead>
          <tbody>
            <Spacer aria-hidden="true" />
            {files.map(([name, date]) => (
              <FileRow key={name}>
                <Cell><NameCell><Folder />{name}</NameCell></Cell>
                <Cell>{date}</Cell>
                <Cell>File folder</Cell>
                <Cell />
              </FileRow>
            ))}
          </tbody>
        </FileTable>
      </FilePane>
    </Body>
    <StatusBar>
      6 items
      <ViewButtons>
        <ViewButton $on aria-label="Details view"><DetailsIcon /></ViewButton>
        <ViewButton aria-label="Thumbnail view"><PictureIcon w={18} h={14} /></ViewButton>
      </ViewButtons>
    </StatusBar>
  </Window>
);

export default function App() {
  return (
    <Screen>
      <GlobalStyle />
      <Wallpaper aria-hidden="true"><LightRay /></Wallpaper>
      <Desktop>
        <Shortcuts>
          <Shortcut>
            <ShortcutArt><RecycleBin /></ShortcutArt>
            Recycle Bin
          </Shortcut>
          <Shortcut>
            <ShortcutArt>
              <EdgeIcon size={61} />
              <LinkBadge><ShortcutArrow /></LinkBadge>
            </ShortcutArt>
            <span>Microsoft<br />Edge</span>
          </Shortcut>
        </Shortcuts>
        <Explorer />
        <JumpList>
          <JumpItem>
            <Line w={16} h={16} d="m.5.5 15 15M15.500.5l-15 15" color="#fff" sw={1.5} />
            Close window
          </JumpItem>
        </JumpList>
      </Desktop>
      <Taskbar>
        <TaskButton $w={60} aria-label="Start"><StartIcon /></TaskButton>
        <TaskSearch>
          <Magnifier size={21} color="#222" sw={1.5} />
          <TaskSearchInput type="text" aria-label="Type here to search" placeholder="Type here to search" />
        </TaskSearch>
        <TaskButton $w={60} aria-label="Cortana"><CortanaIcon /></TaskButton>
        <TaskButton $w={60} aria-label="Task view"><TaskViewIcon /></TaskButton>
        <Apps>
          <TaskButton aria-label="Microsoft Edge"><EdgeIcon size={30} /></TaskButton>
          <TaskButton $mark="open" aria-label="File Explorer"><ExplorerIcon /></TaskButton>
          <TaskButton aria-label="Microsoft Store"><StoreIcon /></TaskButton>
          <TaskButton aria-label="Mail"><MailIcon /></TaskButton>
          <TaskButton $mark="active" aria-label="Setup"><InstallerIcon /></TaskButton>
        </Apps>
        <Tray>
          <TrayButton $w={60} aria-label="News"><NewsIcon /></TrayButton>
          <TrayButton $w={30} aria-label="Show hidden icons"><Line w={16} h={9} d="m.5 8.500 7.500-7.500 7.500 7.500" color="#fff" sw={1.3} /></TrayButton>
          <TrayButton $w={30} aria-label="Network"><GlobeIcon /></TrayButton>
          <TrayButton $w={30} aria-label="Volume"><SpeakerIcon /></TrayButton>
          <Clock>3:19 PM<br />11/2/2022</Clock>
          <NoticeButton $w={47} aria-label="Notifications">
            <NoticeIcon />
            <NoticeCount>1</NoticeCount>
          </NoticeButton>
          <ShowDesktop aria-label="Show desktop" />
        </Tray>
      </Taskbar>
      <Pointer><PointerArt /></Pointer>
    </Screen>
  );
}
